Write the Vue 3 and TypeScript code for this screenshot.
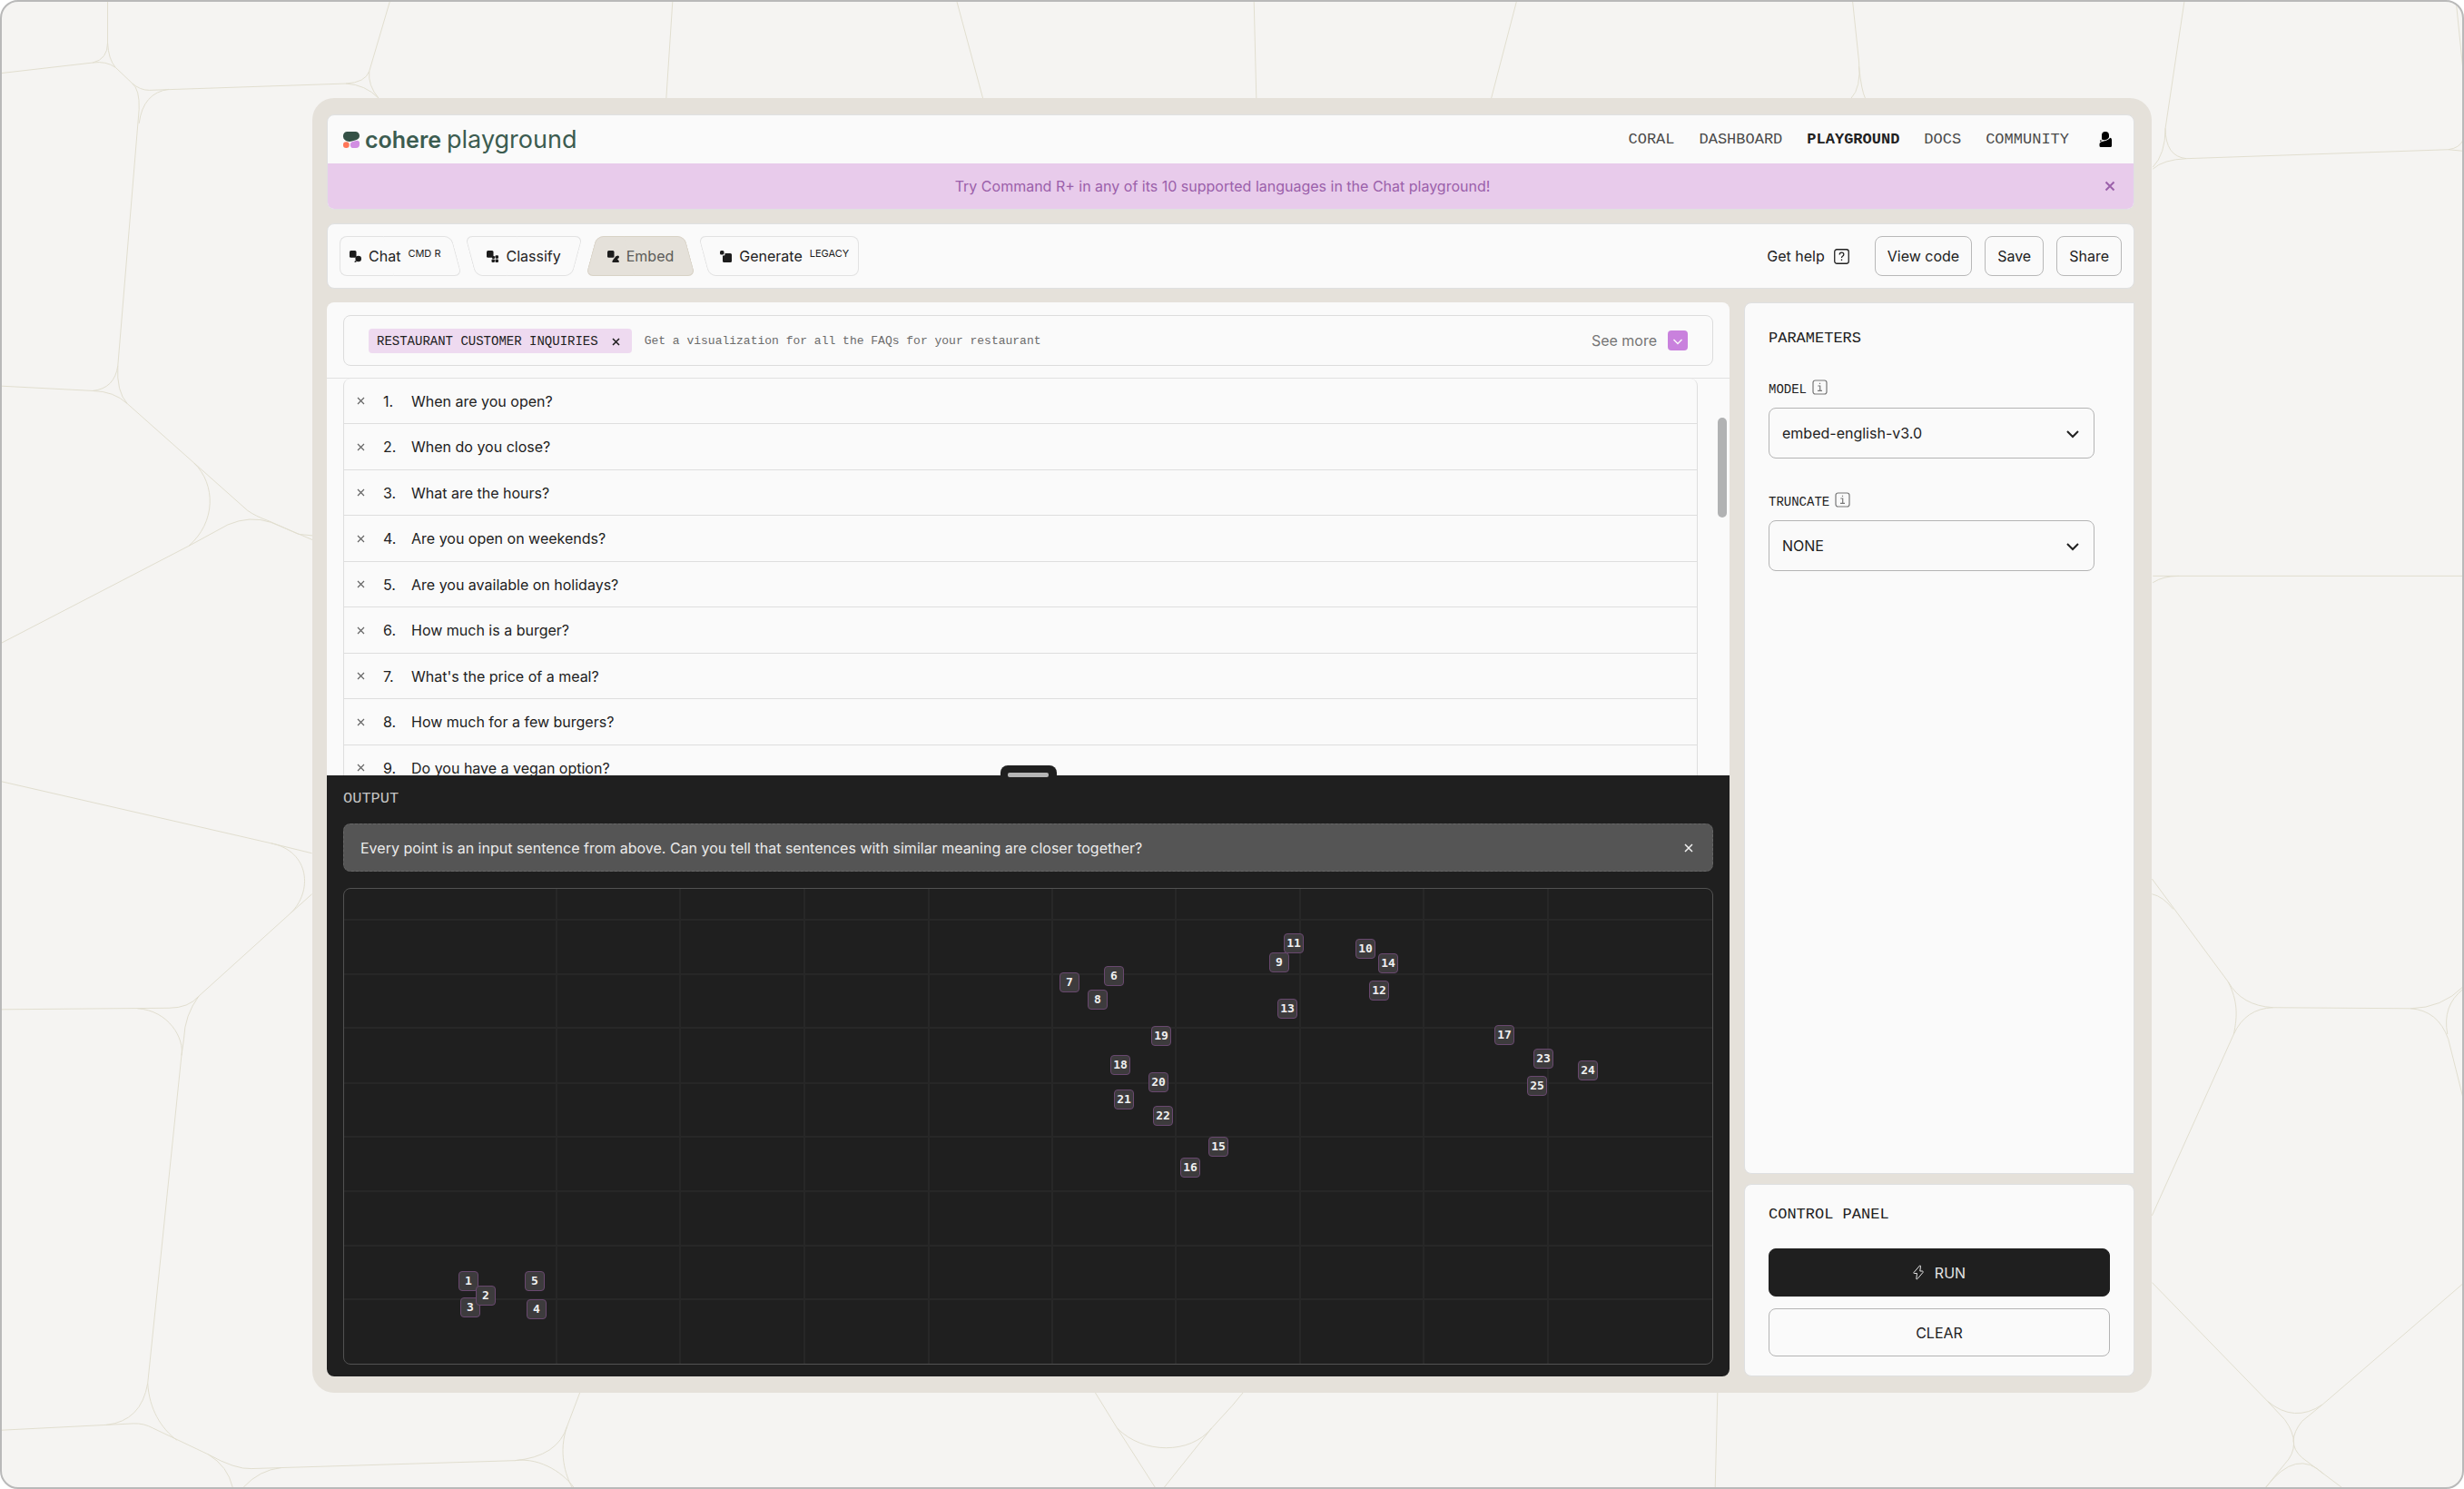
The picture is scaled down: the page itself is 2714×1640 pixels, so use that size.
<script setup lang="ts">
import { ref } from 'vue'

interface Tab {
  id: string
  label: string
  tag?: string
}

interface Point {
  id: number
  x: number
  y: number
}

const navLinks = ['CORAL', 'DASHBOARD', 'PLAYGROUND', 'DOCS', 'COMMUNITY']

const tabs: Tab[] = [
  { id: 'chat', label: 'Chat', tag: 'CMD R' },
  { id: 'classify', label: 'Classify' },
  { id: 'embed', label: 'Embed' },
  { id: 'generate', label: 'Generate', tag: 'LEGACY' },
]
const activeTab = ref('embed')

const sentences = ref<string[]>([
  'When are you open?',
  'When do you close?',
  'What are the hours?',
  'Are you open on weekends?',
  'Are you available on holidays?',
  'How much is a burger?',
  "What's the price of a meal?",
  'How much for a few burgers?',
  'Do you have a vegan option?',
])

const model = ref('embed-english-v3.0')
const truncate = ref('NONE')

// Projected embeddings, in plot units
const plotWidth = 1507
const plotHeight = 523
const points: Point[] = [
  { id: 1, x: 137, y: 432 },
  { id: 3, x: 139, y: 461 },
  { id: 2, x: 156, y: 448 },
  { id: 5, x: 210, y: 432 },
  { id: 4, x: 212, y: 463 },
  { id: 7, x: 799, y: 103 },
  { id: 6, x: 848, y: 96 },
  { id: 8, x: 830, y: 122 },
  { id: 11, x: 1046, y: 60 },
  { id: 9, x: 1030, y: 81 },
  { id: 10, x: 1125, y: 66 },
  { id: 14, x: 1150, y: 82 },
  { id: 12, x: 1140, y: 112 },
  { id: 13, x: 1039, y: 132 },
  { id: 19, x: 900, y: 162 },
  { id: 18, x: 855, y: 194 },
  { id: 20, x: 897, y: 213 },
  { id: 21, x: 859, y: 232 },
  { id: 22, x: 902, y: 250 },
  { id: 15, x: 963, y: 284 },
  { id: 16, x: 932, y: 307 },
  { id: 17, x: 1278, y: 161 },
  { id: 23, x: 1321, y: 187 },
  { id: 24, x: 1370, y: 200 },
  { id: 25, x: 1314, y: 217 },
]
const columns = [234, 370, 507, 644, 780, 916, 1053, 1189, 1326]
const rows = [34, 94, 153, 214, 273, 333, 393, 452]

function percent(value: number, total: number): string {
  return `${(value / total) * 100}%`
}

function removeSentence(index: number): void {
  sentences.value.splice(index, 1)
}
</script>

<template>
  <div class="page">
    <svg class="cells" viewBox="0 0 2714 1640" preserveAspectRatio="xMidYMid slice" aria-hidden="true">
      <g transform="scale(.8654 .523)">
        <path d="M137 4V90Q137 125 118 132M137 90Q138 125 147 142M2 154L118 132Q135 128 147 142L168 175Q178 190 190 190L440 176Q465 174 470 150L496 4M168 175Q178 188 177 230L150 770Q146 818 118 823M177 260Q182 195 215 188M2 813L118 823Q145 824 162 850L247 975 315 1075Q325 1087 342 1097L380 1125 398 1128M150 770Q148 825 162 850M247 975C275 1020 275 1100 240 1150M2 1354L240 1150 290 1105Q318 1085 345 1100L398 1137M440 176Q465 178 482 207M470 150Q468 180 482 207M856 4L848 207M1218 4L1251 207" />
      </g>
      <g transform="translate(1357 0) scale(.8654 .523)">
        <path d="M28 4L31 207M362 4L330 207M790 4L798 130Q801 185 788 207M798 140Q801 190 806 207M1212 4L1188 270Q1188 325 1172 352M1188 270Q1188 330 1215 334L1548 315Q1562 312 1567 295M1548 315L1567 318M1215 334Q1185 336 1172 356M1558 4L1567 150M1172 1213H1567M1172 1227Q1185 1213 1205 1213" />
      </g>
      <g transform="translate(0 820) scale(.8654 .523)">
        <path d="M2 78L345 208 397 229M345 208C395 225 398 310 370 355M397 315L370 355 253 530Q240 555 215 555L2 558M175 556C215 560 235 620 231 655M253 530Q235 570 234 620L231 655 188 1345Q180 1425 135 1433M188 1345C190 1400 205 1440 225 1465M2 1444L170 1430Q183 1429 195 1440L265 1495Q300 1527 320 1525L655 1508Q710 1500 722 1435L738 1365M265 1495Q290 1520 296 1564M310 1564Q330 1528 358 1523M722 1435C710 1490 720 1540 728 1564M655 1508C690 1500 720 1540 730 1564M1394 1365L1422 1440C1455 1495 1515 1495 1542 1440L1568 1393M1422 1440L1470 1564M1542 1440L1482 1564" />
      </g>
      <g transform="translate(1357 820) scale(.8654 .523)">
        <path d="M0 1393L14 1365M618 1365L615 1564M1171 283L1268 500Q1285 550 1325 554L1500 556Q1540 555 1567 510M1171 315Q1185 320 1198 347M1268 500C1280 540 1280 570 1275 610L1171 992M1275 610Q1290 556 1325 554M1500 556Q1535 560 1548 620L1567 745M1567 515Q1540 550 1547 610M1171 1133L1318 1383Q1352 1430 1388 1390L1567 1135M1318 1383L1340 1422Q1363 1475 1340 1515L1316 1564M1388 1390L1362 1425Q1340 1470 1362 1502L1412 1564M1316 1564Q1355 1480 1390 1537" />
      </g>
    </svg>

    <div class="frame">
      <header class="card top">
        <div class="topbar">
          <a class="logo" href="#">
            <svg width="18" height="18" viewBox="0 0 18 18" aria-hidden="true">
              <path d="M4.500 0H13.500A4.500 4.500 0 0 1 18 4.500C18 7 16.500 8.300 14 9.200L9.500 10.600C7 11.300 4 11 2 9.300A5 5 0 0 1 0 5V4.500A4.500 4.500 0 0 1 4.500 0Z" fill="#355146" />
              <rect x="0" y="11.300" width="6.700" height="6.700" rx="3.200" fill="#ff7759" />
              <path d="M12 10.600L14.500 9.900A2.700 2.700 0 0 1 18 12.600V14A4 4 0 0 1 14 18H11.500A3.700 3.700 0 0 1 7.800 14.200C7.800 12 9.500 11.300 12 10.600Z" fill="#d18ee2" />
            </svg>
            <span class="brand">cohere</span>
            <span class="product">playground</span>
          </a>
          <nav class="nav">
            <a v-for="link in navLinks" :key="link" href="#" :class="{ current: link === 'PLAYGROUND' }">{{ link }}</a>
            <button class="user" type="button" aria-label="Account">
              <svg width="14" height="17" viewBox="0 0 14 17" aria-hidden="true">
                <path d="M7 0A4 4 0 0 1 11 4V5.500C11 8 8.500 8.500 6.500 9.300L3.600 9A4 4 0 0 1 3 6V4A4 4 0 0 1 7 0Z" />
                <path d="M12.500 6.800Q14 7 14 9V15.500Q14 17 12.500 17H2Q.5 17 .5 15.500V13.500Q.5 12 2.500 11.300L8 9.800Q10.500 9 12.500 6.800Z" />
                <path d="M1 9.500L4 9.800 1 11Z" />
              </svg>
            </button>
          </nav>
        </div>
        <div class="banner">
          <p>Try Command R+ in any of its 10 supported languages in the Chat playground!</p>
          <button type="button" aria-label="Dismiss announcement">
            <svg width="12" height="12" viewBox="0 0 12 12"><path d="M1.500 1.500L10.500 10.500M10.500 1.500L1.500 10.500" /></svg>
          </button>
        </div>
      </header>

      <section class="card toolbar">
        <div class="tabs">
          <button
            v-for="tab in tabs"
            :key="tab.id"
            type="button"
            class="tab"
            :class="[tab.id, { active: tab.id === activeTab }]"
            @click="activeTab = tab.id"
          >
            <svg width="13" height="13" viewBox="0 0 13 13" aria-hidden="true">
              <template v-if="tab.id === 'generate'">
                <rect width="4.500" height="4.500" rx="1.500" />
                <path d="M5.500 3H11.500Q13 3 13 4.500V11.500Q13 13 11.500 13H4.500Q3 13 3 11.500V5.500H4.200Q5.500 5.500 5.500 4Z" />
              </template>
              <template v-else>
                <rect width="7.500" height="7.800" rx="1.500" />
                <template v-if="tab.id === 'chat'">
                  <circle cx="9.700" cy="9" r="3.300" />
                  <path d="M5.500 13Q5.200 11 7 11L8 12Q7 13 5.500 13Z" />
                </template>
                <template v-if="tab.id === 'classify'">
                  <rect x="9.500" y="5.300" width="3.500" height="3.400" rx="1" />
                  <rect x="5.500" y="9.500" width="3.400" height="3.500" rx="1" />
                  <rect x="9.500" y="9.500" width="3.500" height="3.500" rx="1" />
                  <rect x="6" y="6" width="3" height="3" rx="1" />
                </template>
                <path v-if="tab.id === 'embed'" d="M8 8Q9 5.500 11.500 5.500Q13 5.500 13 7T11 9.200L12.500 11Q13.500 13 12 13H6.500Q5 13 5.500 11.500T8 8Z" />
              </template>
            </svg>
            <span>{{ tab.label }}</span>
            <sup v-if="tab.tag">{{ tab.tag }}</sup>
          </button>
        </div>
        <div class="actions">
          <a class="help" href="#">
            <span>Get help</span>
            <svg width="17" height="17" viewBox="0 0 17 17" aria-hidden="true">
              <rect x=".75" y=".75" width="15.500" height="15.500" rx="2.500" />
              <path d="M6.200 6.500Q6.200 4.200 8.500 4.200T10.800 6.300Q10.800 7.600 9.500 8.300Q8.500 8.900 8.500 10M8.500 11.600V13" />
            </svg>
          </a>
          <button type="button">View code</button>
          <button type="button">Save</button>
          <button type="button">Share</button>
        </div>
      </section>

      <main class="main">
        <section class="workspace">
          <div class="preset-wrap">
            <div class="preset">
              <button class="chip" type="button">
                <span>RESTAURANT CUSTOMER INQUIRIES</span>
                <svg width="9" height="9" viewBox="0 0 9 9" aria-hidden="true"><path d="M1 1L8 8M8 1L1 8" /></svg>
              </button>
              <p>Get a visualization for all the FAQs for your restaurant</p>
              <button class="more" type="button">
                <span>See more</span>
                <svg width="22" height="22" viewBox="0 0 22 22" aria-hidden="true">
                  <rect width="22" height="22" rx="4" fill="#c981dd" />
                  <path d="M6.500 10L11 14.500 15.500 10" fill="none" stroke="#fafafa" stroke-width="1.400" />
                </svg>
              </button>
            </div>
          </div>
          <div class="inputs">
            <ol>
              <li v-for="(sentence, index) in sentences" :key="sentence">
                <button type="button" :aria-label="`Remove input ${index + 1}`" @click="removeSentence(index)">
                  <svg width="9" height="9" viewBox="0 0 9 9"><path d="M1 1L8 8M8 1L1 8" /></svg>
                </button>
                <span class="number">{{ index + 1 }}.</span>
                <span>{{ sentence }}</span>
              </li>
            </ol>
            <div class="thumb"></div>
          </div>

          <div class="output">
            <div class="handle"><i></i></div>
            <h2>OUTPUT</h2>
            <div class="note">
              <p>Every point is an input sentence from above. Can you tell that sentences with similar meaning are closer together?</p>
              <button type="button" aria-label="Dismiss hint">
                <svg width="10" height="10" viewBox="0 0 10 10"><path d="M1 1L9 9M9 1L1 9" /></svg>
              </button>
            </div>
            <div class="plot">
              <svg class="grid" :viewBox="`0 0 ${plotWidth} ${plotHeight}`" preserveAspectRatio="none" aria-hidden="true">
                <path v-for="x in columns" :key="`c${x}`" :d="`M${x} 0V${plotHeight}`" />
                <path v-for="y in rows" :key="`r${y}`" :d="`M0 ${y}H${plotWidth}`" />
              </svg>
              <span
                v-for="point in points"
                :key="point.id"
                class="point"
                :style="{ left: percent(point.x, plotWidth), top: percent(point.y, plotHeight) }"
              >{{ point.id }}</span>
            </div>
          </div>
        </section>

        <aside class="side">
          <section class="card params">
            <h2>PARAMETERS</h2>
            <div class="field">
              <div class="label">
                <label for="model">MODEL</label>
                <svg width="17" height="17" viewBox="0 0 17 17" aria-hidden="true">
                  <rect x="1" y="1" width="15" height="15" rx="2.500" />
                  <path d="M6.300 7H8.700V12M6 12.300H11M8.500 3.700V5" />
                </svg>
              </div>
              <div class="select">
                <select id="model" v-model="model">
                  <option>embed-english-v3.0</option>
                </select>
                <svg width="14" height="9" viewBox="0 0 14 9" aria-hidden="true"><path d="M1 1L7 7 13 1" /></svg>
              </div>
            </div>
            <div class="field">
              <div class="label">
                <label for="truncate">TRUNCATE</label>
                <svg width="17" height="17" viewBox="0 0 17 17" aria-hidden="true">
                  <rect x="1" y="1" width="15" height="15" rx="2.500" />
                  <path d="M6.300 7H8.700V12M6 12.300H11M8.500 3.700V5" />
                </svg>
              </div>
              <div class="select">
                <select id="truncate" v-model="truncate">
                  <option>NONE</option>
                </select>
                <svg width="14" height="9" viewBox="0 0 14 9" aria-hidden="true"><path d="M1 1L7 7 13 1" /></svg>
              </div>
            </div>
          </section>
          <section class="card control">
            <h2>CONTROL PANEL</h2>
            <button class="run" type="button">
              <svg width="12" height="17" viewBox="0 0 12 17" aria-hidden="true">
                <path d="M7.500 1L1 8.500Q.5 9.500 1.500 9.500H4.500L3.800 15.500Q4 16.500 5 15.500L11 8.500Q11.500 7 10.500 7H7.800L8.500 1.500Q8.300 .5 7.500 1Z" />
              </svg>
              <span>RUN</span>
            </button>
            <button class="clear" type="button">CLEAR</button>
          </section>
        </aside>
      </main>
    </div>
  </div>
</template>

<style>
body {
  background: #fff;
}
</style>

<style scoped>
* {
  box-sizing: border-box;
}

h2,
p,
ol {
  margin: 0;
  padding: 0;
  font-weight: 400;
}

button,
select {
  margin: 0;
  padding: 0;
  border: 0;
  background: none;
  color: inherit;
  font: inherit;
  cursor: pointer;
}

a {
  color: inherit;
  text-decoration: none;
}

svg {
  display: block;
  flex: none;
}

.page {
  position: relative;
  display: flex;
  min-height: 100vh;
  padding: 106px 342px 104px;
  overflow: hidden;
  border: 2px solid #b9b9b9;
  border-radius: 20px;
  background: #f5f4f2;
  color: #212121;
  font: 16px/24px Inter, sans-serif;
}

.cells {
  position: absolute;
  top: -2px;
  left: -2px;
  width: calc(100% + 4px);
  height: calc(100% + 4px);
  fill: none;
  stroke: #e1decf;
}

.cells path {
  vector-effect: non-scaling-stroke;
}

.frame {
  position: relative;
  display: flex;
  flex: 1;
  flex-direction: column;
  gap: 15px;
  min-width: 0;
  padding: 18px 19px 18px 16px;
  border-radius: 24px;
  background: #e5e1da;
}

.card {
  border: 1px solid #dfe0e1;
  border-radius: 8px;
  background: #fafafa;
}

.top {
  overflow: hidden;
}

.topbar {
  display: flex;
  align-items: center;
  justify-content: space-between;
  height: 53px;
  padding: 0 24px 0 17px;
}

.logo {
  display: flex;
  align-items: center;
  color: #3c5c50;
  font-size: 27px;
  line-height: 32px;
}

.brand {
  margin: 0 6px;
  font-size: 25px;
  font-weight: 600;
}

.nav {
  display: flex;
  align-items: center;
  gap: 27px;
  color: #4a4a4a;
  font: 17px/24px "Liberation Mono", monospace;
}

.nav .current {
  color: #212121;
  font-weight: 700;
}

.user {
  margin-left: 6px;
  fill: #000;
}

.banner {
  display: flex;
  align-items: center;
  gap: 6px;
  height: 50px;
  padding: 0 20px;
  background: #e8cbeb;
  color: #9b60aa;
}

.banner p {
  flex: 1;
  text-align: center;
}

.banner svg {
  fill: none;
  stroke: #9b60aa;
  stroke-width: 2;
}

.toolbar {
  display: flex;
  align-items: center;
  justify-content: space-between;
  height: 72px;
  padding: 0 13px;
}

.tabs {
  display: flex;
  gap: 3px;
}

.tab {
  position: relative;
  display: flex;
  align-items: center;
  height: 44px;
  padding: 0 24px;
  isolation: isolate;
}

.tab::before,
.tab::after {
  position: absolute;
  z-index: -1;
  top: 0;
  bottom: 0;
  border: 1px solid #e2e2e2;
  background: #fafafa;
  content: "";
}

.tab::before {
  right: 40%;
  left: 6px;
  border-right: 0;
  border-radius: 8px 0 0 8px;
  transform: skewX(15deg);
}

.tab::after {
  right: 6px;
  left: 40%;
  border-left: 0;
  border-radius: 0 8px 8px 0;
  transform: skewX(-15deg);
}

.tab.chat {
  padding-left: 11px;
}

.tab.chat::before {
  left: 0;
  transform: none;
}

.tab.chat::after,
.tab.embed::after {
  transform: skewX(15deg);
}

.tab.embed::before {
  transform: skewX(-15deg);
}

.tab.generate {
  padding-right: 11px;
}

.tab.generate::after {
  right: 0;
  transform: none;
}

.tab.active {
  color: #5b5b58;
}

.tab.active::before,
.tab.active::after {
  border-color: #d8d2c6;
  background: #e5e1da;
}

.tab svg {
  margin-right: 8px;
  fill: #1c1c1c;
}

.tab sup {
  align-self: flex-start;
  margin: 11px 0 0 8px;
  font-size: 11px;
  line-height: 16px;
}

.actions {
  display: flex;
  align-items: center;
  gap: 14px;
}

.actions button {
  height: 44px;
  padding: 0 13px;
  border: 1px solid #b8b8b8;
  border-radius: 8px;
}

.help {
  display: flex;
  align-items: center;
  gap: 10px;
  margin-right: 14px;
}

.help svg {
  fill: none;
  stroke: #212121;
  stroke-width: 1.3;
}

.main {
  display: flex;
  flex: 1;
  gap: 16px;
}

.workspace {
  display: flex;
  flex: 1;
  flex-direction: column;
  min-width: 0;
  overflow: hidden;
  border-radius: 8px;
  background: #fafafa;
}

.preset-wrap {
  padding: 14px 18px 13px;
  border-bottom: 1px solid #e2e2e2;
}

.preset {
  display: flex;
  align-items: center;
  height: 56px;
  padding: 0 27px;
  border: 1px solid #dcdcdc;
  border-radius: 8px;
}

.chip {
  display: flex;
  align-items: center;
  gap: 15px;
  height: 27px;
  padding: 2px 13px 0 9px;
  border-radius: 4px;
  background: #eedaf0;
  font: 14px/20px "Liberation Mono", monospace;
}

.chip svg {
  fill: none;
  stroke: #212121;
  stroke-width: 1.6;
}

.preset p {
  flex: 1;
  margin-left: 14px;
  padding-top: 2px;
  color: #6b6b6b;
  font: 13px/20px "Liberation Mono", monospace;
}

.more {
  display: flex;
  align-items: center;
  gap: 12px;
  color: #757575;
}

.inputs {
  position: relative;
  height: 437px;
  padding: 0 35px 0 18px;
  overflow: hidden;
}

.inputs ol {
  border: solid #dedede;
  border-width: 0 1px 1px;
  border-radius: 8px;
  list-style: none;
}

.inputs li {
  display: flex;
  align-items: center;
  height: 50px;
  padding-left: 14px;
  border-bottom: 1px solid #dedede;
}

.inputs li:nth-child(even) {
  height: 51px;
}

.inputs li svg {
  fill: none;
  stroke: #666;
  stroke-width: 1.2;
}

.number {
  width: 31px;
  margin-left: 20px;
}

.thumb {
  position: absolute;
  top: 43px;
  right: 3px;
  width: 10px;
  height: 110px;
  border-radius: 5px;
  background: #b1b2b3;
}

.output {
  position: relative;
  display: flex;
  flex: 1;
  flex-direction: column;
  padding: 14px 18px 13px;
  background: #1f1f1f;
}

.handle {
  position: absolute;
  top: -11px;
  left: calc(50% - 31px);
  display: flex;
  justify-content: center;
  width: 62px;
  height: 22px;
  padding-top: 8px;
  border-radius: 8px 8px 0 0;
  background: #1f1f1f;
}

.handle i {
  width: 45px;
  height: 5px;
  border-radius: 2px;
  background: #b5b5b5;
}

.output h2 {
  color: #c4c4c4;
  font: 17px/24px "Liberation Mono", monospace;
}

.note {
  display: flex;
  align-items: center;
  justify-content: space-between;
  height: 53px;
  margin: 15px 0 18px;
  padding: 0 21px 0 18px;
  border: 1px dashed #666;
  border-radius: 8px;
  background: #555;
  color: #ebebeb;
}

.note svg {
  fill: none;
  stroke: #f2f2f2;
  stroke-width: 1.5;
}

.plot {
  position: relative;
  flex: 1;
  min-height: 240px;
  overflow: hidden;
  border: 1px solid #525252;
  border-radius: 8px;
}

.grid {
  position: absolute;
  width: 100%;
  height: 100%;
  stroke: #272727;
  stroke-width: 2;
}

.point {
  position: absolute;
  width: 22px;
  height: 22px;
  margin: -11px 0 0 -11px;
  border: 1px solid #69486f;
  border-radius: 4px;
  background: #3d3b3d;
  color: #f0f0f0;
  font: 700 13px/20px "DejaVu Sans Mono", monospace;
  text-align: center;
}

.side {
  display: flex;
  flex: none;
  flex-direction: column;
  gap: 11px;
  width: 430px;
}

.side h2 {
  font: 17px/24px "Liberation Mono", monospace;
}

.params {
  flex: 1;
  padding: 27px 43px 27px 26px;
  border-radius: 8px 0 0 8px;
}

.field {
  margin-top: 33px;
}

.field + .field {
  margin-top: 37px;
}

.label {
  display: flex;
  gap: 6px;
  height: 31px;
  font: 14px/22px "Liberation Mono", monospace;
}

.label svg {
  fill: none;
  stroke: #777;
  stroke-width: 1.2;
}

.select {
  position: relative;
}

.select select {
  width: 100%;
  height: 56px;
  padding: 0 14px;
  border: 1px solid #b4b4b4;
  border-radius: 8px;
  appearance: none;
}

.select svg {
  position: absolute;
  top: 25px;
  right: 17px;
  fill: none;
  stroke: #212121;
  stroke-width: 2;
  pointer-events: none;
}

.control {
  display: flex;
  flex-direction: column;
  padding: 21px 26px;
}

.control h2 {
  margin-bottom: 25px;
}

.control button {
  display: flex;
  align-items: center;
  justify-content: center;
  gap: 12px;
  height: 53px;
  border: 1px solid #b4b4b4;
  border-radius: 8px;
}

.control .run {
  margin-bottom: 13px;
  border-color: #1f1f1f;
  background: #1f1f1f;
  color: #e4e4e4;
}

.run svg {
  fill: none;
  stroke: #e4e4e4;
}
</style>
